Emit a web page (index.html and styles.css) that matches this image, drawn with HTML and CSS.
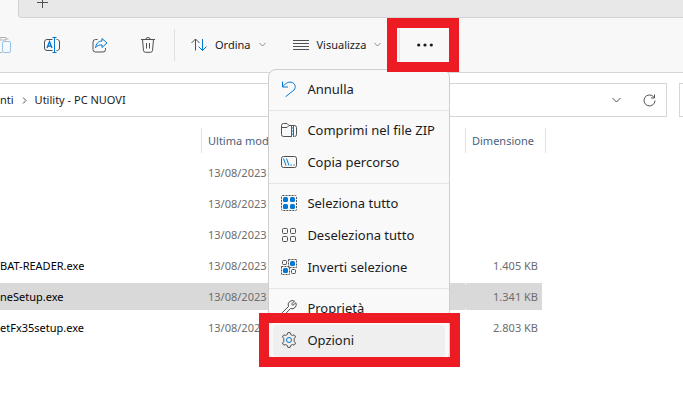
FILE: index.html
```html
<!DOCTYPE html>
<html lang="it">
<head>
<meta charset="utf-8">
<meta name="viewport" content="width=device-width, initial-scale=1">
<title>Utility - PC NUOVI</title>
<link rel="stylesheet" href="styles.css">
</head>
<body>
<header class="tabs">
  <div class="tab-active"></div>
  <div class="tab-strip">
    <button class="new-tab" aria-label="Nuova scheda"><svg width="11" height="11" viewBox="0 0 11 11"><path d="M5.5 0v11M0 5.5h11"/></svg></button>
  </div>
</header>

<div class="toolbar" role="toolbar">
  <button class="tool tool-disabled" aria-label="Incolla" disabled><svg width="16" height="18" viewBox="0 0 16 18"><path d="M5 3H1.500v13.500H7M11 3h2.500M5 1.500h6v2.500H5z"/><path class="blue" d="M9 5.500h5a1.500 1.500 0 0 1 1.500 1.500v8a1.500 1.500 0 0 1-1.500 1.500H9A1.500 1.500 0 0 1 7.500 15V7A1.500 1.500 0 0 1 9 5.500z"/></svg></button>
  <button class="tool" aria-label="Rinomina"><svg width="16" height="16" viewBox="0 0 16 16"><path d="M8.500 2.500H3A2.500 2.500 0 0 0 .5 5v6A2.500 2.500 0 0 0 3 13.500h5.500M12.500 2.500a2.500 2.500 0 0 1 3 2.500v6a2.500 2.500 0 0 1-3 2.500"/><path class="blue" d="M10.500.5v15M8.500.5h4M8.500 15.500h4"/><path class="blue bold" d="M3 11l2.500-6.500L8 11M3.800 9h3.400"/></svg></button>
  <button class="tool" aria-label="Condividi"><svg width="16" height="16" viewBox="0 0 16 16"><path d="M5.500 2.500H3.500a2.500 2.500 0 0 0-2.500 2.500v7.500A2.500 2.500 0 0 0 3.500 15h7.500a2.500 2.500 0 0 0 2.500-2.500v-1.500"/><path class="blue" d="M10 1.500l5 4.500-5 4.500V8C7 7.700 5 8.600 3.500 10.800 4 7 6 4.200 10 4z"/></svg></button>
  <button class="tool" aria-label="Elimina"><svg width="16" height="16" viewBox="0 0 16 16"><path d="M1 2.500h14M5.800 2.500a2.200 2 0 0 1 4.400 0M2.500 2.500l1 11a2 2 0 0 0 2 1.800h5a2 2 0 0 0 2-1.800l1-11M6.500 6v5.500M9.500 6v5.500"/></svg></button>
  <span class="divider"></span>
  <button class="tool-text"><svg width="16" height="14" viewBox="0 0 16 14"><path d="M4.500 12.500V1M.5 5l4-4 4 4"/><path class="blue" d="M11.500 1v11.500M7.500 8.500l4 4 4-4"/></svg><span>Ordina</span><svg class="caret" width="7" height="5" viewBox="0 0 7 5"><path d="M.5 1l3 3 3-3"/></svg></button>
  <button class="tool-text tool-view"><svg width="16" height="12" viewBox="0 0 16 12"><path d="M0 1.500h16M0 4.500h16M0 7.500h16M0 10.500h16"/></svg><span>Visualizza</span><svg class="caret" width="7" height="5" viewBox="0 0 7 5"><path d="M.5 1l3 3 3-3"/></svg></button>
  <div class="more">
    <span class="divider"></span>
    <button class="more-button" aria-label="Altro"><svg width="16" height="4" viewBox="0 0 16 4"><g class="dots"><circle cx="1.700" cy="2" r="1.600"/><circle cx="8" cy="2" r="1.600"/><circle cx="14.300" cy="2" r="1.600"/></g></svg></button>
    <div class="menu" role="menu">
      <button class="item" role="menuitem"><svg width="16" height="16" viewBox="0 0 16 16"><path class="blue" d="M1.500.5v5.500H7M1.500 6C4 2.500 7 .8 10 1.200c4 .5 5.500 5 3 7.800L4.500 15.800"/></svg>Annulla</button>
      <hr>
      <button class="item" role="menuitem"><svg width="16" height="16" viewBox="0 0 16 16"><path d="M10 14.500H2.500a2 2 0 0 1-2-2v-9a2 2 0 0 1 2-2H6l2 2h5.500a2 2 0 0 1 2 2v7a2 2 0 0 1-2 2M.5 5.500H6l2-2"/><path class="blue" d="M10.500 4v11M12.500 4v11M10.500 6h2M10.500 9h2M10.500 12h2"/></svg>Comprimi nel file ZIP</button>
      <button class="item" role="menuitem"><svg width="16" height="12" viewBox="0 0 16 12"><rect x=".5" y=".5" width="15" height="11" rx="2"/><path class="blue" d="M2.500 2.500l2.500 7M5.500 2.500l2.500 7M9.500 9h1.300M12.500 9h1.300"/></svg>Copia percorso</button>
      <hr>
      <button class="item" role="menuitem"><svg width="16" height="16" viewBox="0 0 16 16"><rect class="dash" x=".5" y=".5" width="15" height="15" rx="1"/><g class="fill"><rect x="2" y="2" width="5" height="5" rx="1.500"/><rect x="9" y="2" width="5" height="5" rx="1.500"/><rect x="2" y="9" width="5" height="5" rx="1.500"/><rect x="9" y="9" width="5" height="5" rx="1.500"/></g></svg>Seleziona tutto</button>
      <button class="item" role="menuitem"><svg width="16" height="16" viewBox="0 0 16 16"><rect x="1.500" y="1.500" width="5" height="5" rx="1"/><rect x="9.500" y="1.500" width="5" height="5" rx="1"/><rect x="1.500" y="9.500" width="5" height="5" rx="1"/><rect x="9.500" y="9.500" width="5" height="5" rx="1"/></svg>Deseleziona tutto</button>
      <button class="item" role="menuitem"><svg width="16" height="16" viewBox="0 0 16 16"><rect x="1.500" y="1.500" width="4" height="4" rx="1"/><rect x="10.500" y="10.500" width="4" height="4" rx="1"/><rect class="dash" x="7.500" y=".5" width="8" height="8"/><rect class="dash" x=".5" y="7.500" width="8" height="8"/><g class="fill"><rect x="9" y="2" width="5" height="5" rx="1.500"/><rect x="2" y="9" width="5" height="5" rx="1.500"/></g></svg>Inverti selezione</button>
      <hr>
      <button class="item" role="menuitem"><svg width="16" height="16" viewBox="0 0 16 16"><path d="M13.500 1.200A4.200 4.200 0 0 0 7.500 6.500L1.200 12.700a1.500 1.500 0 0 0 2.200 2.200L9.500 8.500a4.200 4.200 0 0 0 5.300-5.800L12 5.300 10.500 4z"/></svg>Proprietà</button>
      <button class="item item-current" role="menuitem"><svg width="16" height="16" viewBox="0 0 16 16"><path d="M6.300 2.500 6.800.7Q8 .3 9.200.7l.5 1.800 1.600.9 1.900-.5Q14.200 3.800 14.500 5L13.200 6.500v3L14.500 11q-.3 1.200-1.300 2.100l-1.900-.5-1.600.9-.5 1.800Q8 15.700 6.800 15.300l-.5-1.800-1.600-.9-1.900.5Q1.800 12.200 1.500 11L2.800 9.500v-3L1.500 5q.3-1.200 1.300-2.100l1.900.5z"/><circle class="blue" cx="8" cy="8" r="2.500"/></svg>Opzioni</button>
    </div>
  </div>
</div>

<div class="location">
  <nav class="address" aria-label="Percorso">
    <a href="#">nti</a>
    <svg class="crumb" width="5" height="7" viewBox="0 0 5 7"><path d="M1 .5l3 3-3 3"/></svg>
    <a href="#">Utility - PC NUOVI</a>
    <button class="address-button address-history" aria-label="Percorsi precedenti"><svg width="9" height="6" viewBox="0 0 9 6"><path d="M.5 1l4 4 4-4"/></svg></button>
    <button class="address-button" aria-label="Aggiorna"><svg width="13" height="13" viewBox="0 0 13 13"><path d="M10.800 3A5.500 5.500 0 1 0 12 6.500M11.500.5v3.500H8"/></svg></button>
  </nav>
  <input class="search" type="search" aria-label="Cerca">
</div>

<table class="files">
  <colgroup><col class="col-name"><col class="col-date"><col class="col-size"></colgroup>
  <thead>
    <tr><th aria-label="Nome"></th><th><span>Ultima modifica</span></th><th><span class="last">Dimensione</span></th></tr>
  </thead>
  <tbody>
    <tr><td></td><td>13/08/2023</td><td></td></tr>
    <tr><td></td><td>13/08/2023</td><td></td></tr>
    <tr><td></td><td>13/08/2023</td><td></td></tr>
    <tr><td>BAT-READER.exe</td><td>13/08/2023</td><td>1.405 KB</td></tr>
    <tr class="selected"><td>neSetup.exe</td><td>13/08/2023</td><td>1.341 KB</td></tr>
    <tr><td>etFx35setup.exe</td><td>13/08/2023</td><td>2.803 KB</td></tr>
  </tbody>
</table>
</body>
</html>
```
FILE: styles.css
```css
* { box-sizing: border-box; }

body {
  min-height: 100vh;
  margin: 0;
  overflow: hidden;
  background: #fff;
  color: #1b1b1b;
  font: 11px/16px "Noto Sans", "Open Sans", sans-serif;
}

button {
  display: flex;
  align-items: center;
  padding: 0;
  border: 0;
  background: none;
  color: inherit;
  font: inherit;
}

svg {
  flex: none;
  fill: none;
  stroke: #505050;
}

.blue { stroke: #0078d4; }
.bold { stroke-width: 1.3; }
.dash { stroke-dasharray: 2 1; }
.fill { fill: #0078d4; stroke: none; }
.dots { fill: #1b1b1b; stroke: none; }

/* Tabs */
.tabs {
  display: flex;
  height: 18px;
  background: #f8f8f8;
}

.tab-active { width: 18px; }

.tab-strip {
  flex: 1;
  border: solid #d2d2d2;
  border-width: 0 0 1px 1px;
  border-bottom-left-radius: 4px;
  background: #e8e8e8;
}

.new-tab {
  margin: -3px 0 0 18px;
}

/* Toolbar */
.toolbar {
  display: flex;
  align-items: center;
  height: 55px;
  padding-bottom: 1px;
  border-bottom: 1px solid #d6d6d6;
  background: #f8f8f8;
}

.tool {
  justify-content: center;
  width: 48px;
  height: 32px;
}

.tool-disabled {
  margin-left: -20px;
  padding-right: 2px;
  opacity: .4;
}

.divider {
  width: 1px;
  height: 32px;
  background: #e2e2e2;
}

.toolbar > .divider { margin: 0 8px 0 2px; }

.tool-text {
  gap: 8px;
  height: 32px;
  padding: 0 8px;
}

.tool-view { margin-left: 11px; }

.caret { stroke: #8a8a8a; }

.more {
  position: relative;
  display: flex;
  align-items: center;
  width: 52px;
  height: 34px;
  margin-left: 8px;
  padding-left: 2px;
}

.more-button {
  flex: 1;
  justify-content: center;
  height: 32px;
}

/* Red frames mark the two controls to press */
.more::after,
.item-current::after {
  content: "";
  position: absolute;
  z-index: 2;
  border: 10px solid #ed1c24;
  pointer-events: none;
}

.more::after { inset: -10px; }

.item-current::after { inset: -12px -15px -10px -14px; }

/* Menu */
.menu {
  position: absolute;
  z-index: 1;
  top: 41px;
  right: -1px;
  width: 182px;
  padding: 4px;
  border: 1px solid #cfcfcf;
  border-radius: 8px;
  background: #f9f9f9;
  font-size: 13px;
}

.menu hr {
  height: 1px;
  margin: 4px -4px;
  border: 0;
  background: #e5e5e5;
}

.item {
  position: relative;
  gap: 10px;
  width: 100%;
  height: 32px;
  padding: 0 8px 2px;
  border-radius: 4px;
  white-space: nowrap;
}

.item-current { background: #efefef; }

/* Address bar */
.location {
  display: flex;
  gap: 12px;
  height: 34px;
  margin-top: 10px;
}

.address {
  flex: 1;
  display: flex;
  align-items: center;
  border: 1px solid #d6d6d6;
  border-left: 0;
}

.address a {
  color: inherit;
  text-decoration: none;
}

.crumb { margin: 0 8px; }

.address-button {
  justify-content: center;
  width: 33px;
  height: 32px;
}

.address-history { margin-left: auto; }

.search {
  width: 4px;
  padding: 0;
  border: 1px solid #d6d6d6;
  border-right: 0;
  border-radius: 0;
}

/* File list */
.files {
  width: 546px;
  margin-top: 7px;
  border-spacing: 0 4px;
  table-layout: fixed;
}

.col-name { width: 201px; }
.col-size { width: 81px; }

.files th,
.files td {
  height: 27px;
  padding: 0;
  white-space: nowrap;
}

.files th {
  vertical-align: top;
  color: #4c607a;
  font-weight: 400;
  text-align: left;
}

.files th span {
  display: block;
  height: 25px;
  padding-left: 6px;
  border-left: 1px solid #e2e2e2;
  line-height: 25px;
}

.files th .last { border-right: 1px solid #e2e2e2; }

.files td { color: #6d6d6d; }
.files td:first-child { color: #000; }
.files td:nth-child(2) { padding-left: 7px; }

.files td:last-child {
  padding-right: 4px;
  border-right: 4px solid transparent;
  border-radius: 2px;
  background-clip: padding-box;
  text-align: right;
}

.selected td { background-color: #d9d9d9; }
```
